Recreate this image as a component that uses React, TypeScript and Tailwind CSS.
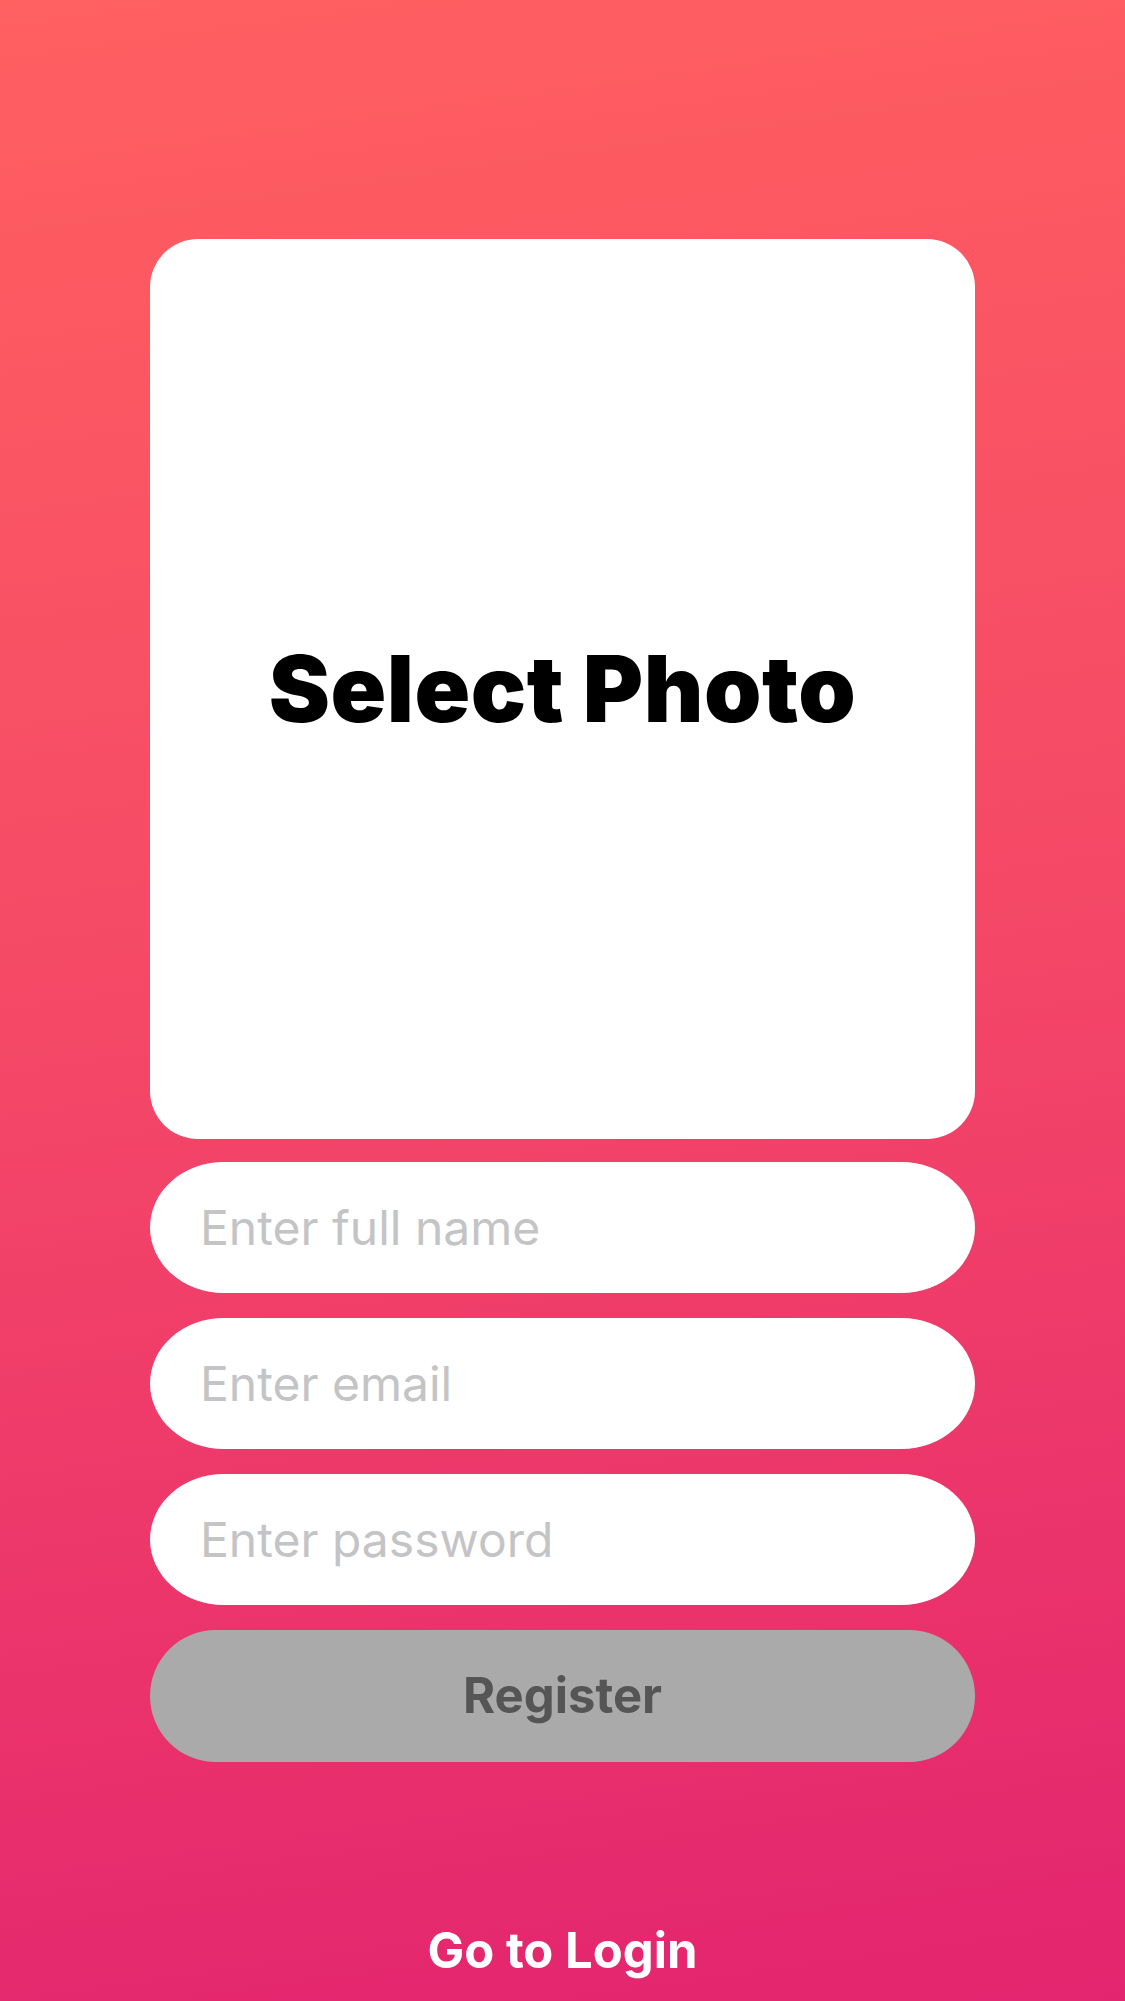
import React from "react";

const fields = [
  { placeholder: "Enter full name", type: "text" },
  { placeholder: "Enter email", type: "email" },
  { placeholder: "Enter password", type: "password" },
];

export default function App() {
  return (
    <div className="flex h-[2001px] w-full flex-col items-stretch bg-[linear-gradient(172deg,#ff6060_0%,#f44767_50%,#e3246f_100%)] px-[150px] pt-[239px] font-['Inter',sans-serif]">
      <button className="flex h-[900px] w-full items-center justify-center rounded-[48px] bg-white">
        <span className="text-[92px] font-black leading-none tracking-[0.5px] text-black">Select Photo</span>
      </button>

      <div className="mt-[23px] flex flex-col gap-[25px]">
        {fields.map((field) => (
          <input
            key={field.placeholder}
            type={field.type}
            placeholder={field.placeholder}
            className="h-[131px] w-full rounded-[74px/66px] bg-white pl-[50px] pr-[50px] text-[48px] text-gray-800 outline-none placeholder:text-[#c4c4c6]"
          />
        ))}
        <button className="h-[132px] w-full rounded-full bg-[#aaaaaa] text-[49px] font-bold text-[#555555]">Register</button>
      </div>

      <button className="mt-[160px] self-center text-[49px] font-bold leading-[57px] text-white">Go to Login</button>
    </div>
  );
}
